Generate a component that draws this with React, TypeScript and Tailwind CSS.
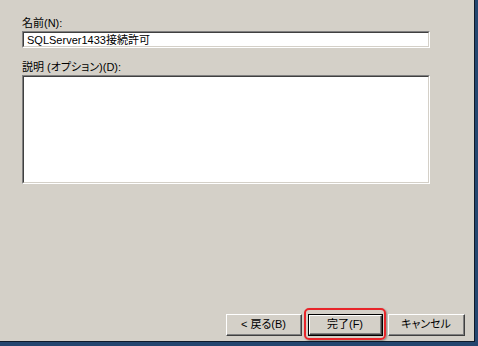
import React from "react";

const font = {
  fontFamily: '"Liberation Sans", "Noto Sans CJK JP", sans-serif',
};

function Sunken({ className, children }: { className: string; children?: React.ReactNode }) {
  return (
    <div className={`border-t border-l border-t-[#808080] border-l-[#808080] border-b border-r border-b-white border-r-white ${className}`}>
      <div className="h-full w-full border-t border-l border-t-[#404040] border-l-[#404040] border-b border-r border-b-[#d4d0c8] border-r-[#d4d0c8] bg-white">
        {children}
      </div>
    </div>
  );
}

function Inner({ label }: { label: string }) {
  return (
    <div className="h-full w-full border-t border-l border-t-white border-l-white border-b border-r border-b-[#404040] border-r-[#404040]">
      <div className="flex h-full w-full items-center justify-center border-b border-r border-b-[#808080] border-r-[#808080] text-[11px] text-black [font-feature-settings:'palt']">
        {label}
      </div>
    </div>
  );
}

export default function App() {
  return (
    <div className="h-[346px] w-[478px] bg-[#24466f]" style={font}>
      <div className="flex h-[342px] w-[475px] flex-col border-b border-r border-b-[#0e1a2a] border-r-[#0e1a2a] bg-[#d4d0c8] pl-[22px] pr-[44px] pt-[15px]">
        <div className="h-[16px] text-[11px] leading-[16px] text-black">名前(N):</div>
        <Sunken className="h-[17px]">
          <div className="pl-[3px] text-[11px] leading-[14px] text-black">SQLServer1433接続許可</div>
        </Sunken>
        <div className="mt-[11px] h-[16px] text-[11px] leading-[16px] text-black [font-feature-settings:'palt']">説明 (オプション)(D):</div>
        <Sunken className="h-[109px]" />
        <div className="flex-1" />
        <div className="mb-[5px] mr-[-35px] flex justify-end">
          <div className="h-[22px] w-[76px]">
            <Inner label="< 戻る(B)" />
          </div>
          <div className="relative ml-[6px] h-[22px] w-[75px]">
            <div className="h-full w-full border border-black">
              <Inner label="完了(F)" />
            </div>
            <div className="absolute left-[-4px] right-[-3px] top-[-6px] bottom-[-4px] rounded-[5px] border-2 border-[#e8252a] shadow-[1px_1px_2px_rgba(0,0,0,0.35)]" />
          </div>
          <div className="ml-[5px] h-[22px] w-[77px]">
            <Inner label="キャンセル" />
          </div>
        </div>
      </div>
    </div>
  );
}
